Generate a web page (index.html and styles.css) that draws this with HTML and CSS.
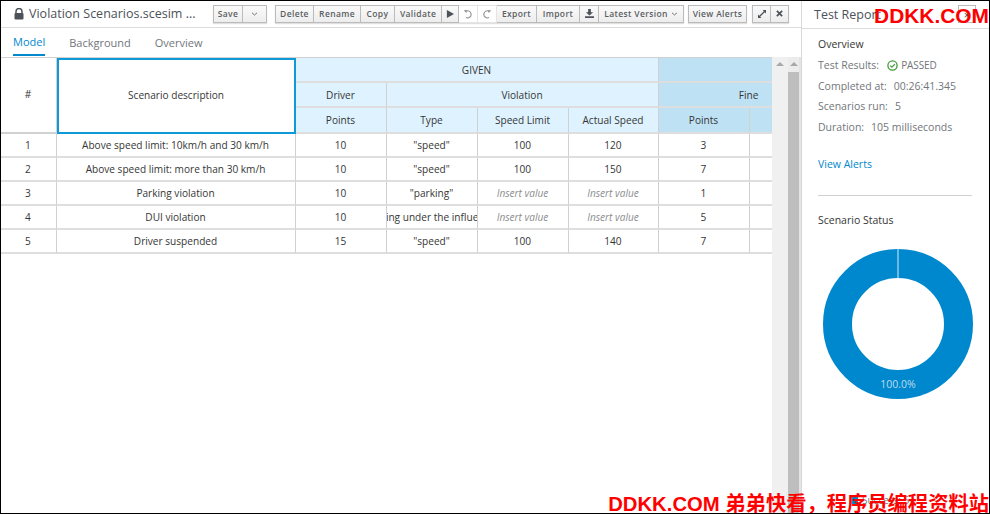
FILE: index.html
```html
<!DOCTYPE html>
<html lang="en">
<head>
<meta charset="utf-8">
<title>Violation Scenarios.scesim</title>
<link rel="stylesheet" href="styles.css">
</head>
<body>
<div class="frame">
  <main class="editor">
    <header class="toolbar">
      <svg class="lock" width="10" height="12" viewBox="0 0 10 12"><path d="M2 5V3.5a3 3 0 0 1 6 0V5" fill="none" stroke="#4d5258" stroke-width="1.5"/><rect x="0.5" y="5" width="9" height="6.5" rx="1" fill="#4d5258"/></svg>
      <span class="doc-title">Violation Scenarios.scesim ...</span>
      <div class="btn-group g-save"><button class="btn">Save</button><button class="btn"><svg width="7" height="4" viewBox="0 0 7 4"><path d="M1 .8l2.5 2.2L6 .8" fill="none" stroke="#72767b"/></svg></button></div>
      <div class="btn-group g-main">
        <button class="btn">Delete</button><button class="btn">Rename</button><button class="btn">Copy</button><button class="btn">Validate</button>
        <button class="btn"><svg width="8" height="8" viewBox="0 0 9 9"><path d="M1 0l8 4.5L1 9z" fill="#4d5258"/></svg></button>
        <button class="btn flat"><svg width="10" height="10" viewBox="0 0 10 10"><path d="M2.6 2.3A3.6 3.6 0 1 1 3 8.6" fill="none" stroke="#8b8d8f" stroke-width="1.1"/><path d="M.8 1.2l3.2.1-.6 2.8z" fill="#8b8d8f"/></svg></button>
        <button class="btn flat"><svg width="10" height="10" viewBox="0 0 10 10"><path d="M7.4 2.3A3.6 3.6 0 1 0 7 8.6" fill="none" stroke="#8b8d8f" stroke-width="1.1"/><path d="M9.2 1.2L6 1.3l.6 2.8z" fill="#8b8d8f"/></svg></button>
        <button class="btn">Export</button><button class="btn">Import</button>
        <button class="btn"><svg width="9" height="9" viewBox="0 0 10 10"><path d="M3.5 0h3v3.5H9L5 7.2 1 3.5h2.5zM0 8h10v2H0z" fill="#4d5258"/></svg></button>
        <button class="btn">Latest Version <svg width="7" height="4" viewBox="0 0 7 4"><path d="M1 .8l2.5 2.2L6 .8" fill="none" stroke="#72767b"/></svg></button>
      </div>
      <div class="btn-group g-alerts"><button class="btn">View Alerts</button></div>
      <div class="btn-group g-win">
        <button class="btn"><svg width="8" height="8" viewBox="0 0 9 9"><path d="M5.2 0H9v3.8L7.6 2.4 2.4 7.6 3.8 9H0V5.2l1.4 1.4 5.2-5.2z" fill="#4d5258"/></svg></button>
        <button class="btn"><svg width="7" height="7" viewBox="0 0 8 8"><path d="M1 1l6 6M7 1L1 7" stroke="#4d5258" stroke-width="2"/></svg></button>
      </div>
    </header>
    <nav class="tabs">
      <a class="tab active">Model</a><a class="tab">Background</a><a class="tab">Overview</a>
    </nav>
    <div class="work">
      <div class="grid-clip">
        <div class="grid">
          <div class="cell head-plain span-r3">#</div>
          <div class="cell head-selected span-r3">Scenario description</div>
          <div class="cell given span-c4">GIVEN</div>
          <div class="cell expect span-c2">&nbsp;</div>
          <div class="cell given">Driver</div>
          <div class="cell given span-c3">Violation</div>
          <div class="cell expect span-c2">Fine</div>
          <div class="cell given">Points</div>
          <div class="cell given">Type</div>
          <div class="cell given">Speed Limit</div>
          <div class="cell given">Actual Speed</div>
          <div class="cell expect">Points</div>
          <div class="cell expect"></div>

          <div class="cell">1</div><div class="cell">Above speed limit: 10km/h and 30 km/h</div><div class="cell">10</div><div class="cell">"speed"</div><div class="cell">100</div><div class="cell">120</div><div class="cell">3</div><div class="cell"></div>
          <div class="cell">2</div><div class="cell">Above speed limit: more than 30 km/h</div><div class="cell">10</div><div class="cell">"speed"</div><div class="cell">100</div><div class="cell">150</div><div class="cell">7</div><div class="cell"></div>
          <div class="cell">3</div><div class="cell">Parking violation</div><div class="cell">10</div><div class="cell">"parking"</div><div class="cell empty">Insert value</div><div class="cell empty">Insert value</div><div class="cell">1</div><div class="cell"></div>
          <div class="cell">4</div><div class="cell">DUI violation</div><div class="cell">10</div><div class="cell">"driving under the influence"</div><div class="cell empty">Insert value</div><div class="cell empty">Insert value</div><div class="cell">5</div><div class="cell"></div>
          <div class="cell">5</div><div class="cell">Driver suspended</div><div class="cell">15</div><div class="cell">"speed"</div><div class="cell">100</div><div class="cell">140</div><div class="cell">7</div><div class="cell"></div>
        </div>
      </div>
      <div class="scrollbars">
        <div class="scroll"><span class="arrow"></span></div>
        <div class="scroll"><span class="arrow"></span><span class="thumb"></span></div>
      </div>
    </div>
  </main>
  <aside class="report">
    <header class="report-head">
      <span class="report-title">Test Report</span>
      <span class="report-close">×</span>
    </header>
    <div class="report-body">
      <h3 class="report-h">Overview</h3>
      <div class="stat"><span>Test Results:</span><span class="passed"><svg width="11" height="11" viewBox="0 0 11 11"><circle cx="5.5" cy="5.5" r="4.6" fill="none" stroke="#3f9c35" stroke-width="1.3"/><path d="M3.2 5.6l1.7 1.6 3-3" fill="none" stroke="#3f9c35" stroke-width="1.2"/></svg>PASSED</span></div>
      <div class="stat"><span>Completed at:</span><span>00:26:41.345</span></div>
      <div class="stat"><span>Scenarios run:</span><span>5</span></div>
      <div class="stat"><span>Duration:</span><span>105 milliseconds</span></div>
      <a class="alerts-link">View Alerts</a>
      <hr class="rule">
      <h3 class="report-h">Scenario Status</h3>
      <div class="donut">
        <svg width="150" height="150" viewBox="0 0 150 150">
          <circle cx="75" cy="75" r="60.5" fill="none" stroke="#0088ce" stroke-width="29"/>
          <rect x="74.5" y="0" width="1" height="30" fill="#d6ecf7"/>
          <text x="75" y="139" text-anchor="middle" class="donut-label">100.0%</text>
        </svg>
      </div>
      <div class="legend"><span class="swatch"></span><span>Success: 5</span></div>
    </div>
  </aside>
  <div class="mark mark-top">DDKK.COM</div>
  <div class="mark mark-bottom">DDKK.COM 弟弟快看，程序员编程资料站</div>
</div>
</body>
</html>
```

FILE: styles.css
```css
* { box-sizing: border-box; }
html, body { margin: 0; padding: 0; }
body { width: 990px; height: 514px; overflow: hidden; background: #fff; font-family: "Open Sans", sans-serif; color: #363636; }

.frame { position: relative; display: flex; width: 990px; height: 514px; border: 1px solid #000; overflow: hidden; background: #fff; }

.editor { width: 800px; display: flex; flex-direction: column; flex: none; }

.toolbar { display: flex; align-items: center; height: 27px; flex: none; padding: 0 0 1px 13px; border-bottom: 1px solid #dcdcdc; }
.lock { flex: none; margin-right: 5px; }
.doc-title { width: 184px; font-size: 12.5px; color: #4d5258; white-space: nowrap; flex: none; }

.btn-group { display: grid; height: 18px; flex: none; box-shadow: 0 1px 1px rgba(0,0,0,.12); }
.g-save { grid-template-columns: 30px 24px; margin-right: 8px; }
.g-main { grid-template-columns: 39px 47px 34px 47px 17px 19px 19px 40px 43px 19px 85px; margin-right: 4px; }
.g-alerts { grid-template-columns: 59px; margin-right: 5px; }
.g-win { grid-template-columns: 19px 18px; }

.btn { display: flex; align-items: center; justify-content: center; gap: 3px; padding: 0; margin: 0; font: 600 8.5px "Open Sans", sans-serif; letter-spacing: .35px; color: #5a5e63; white-space: nowrap; background: linear-gradient(#fafafa, #ededed); border: 1px solid #bbb; border-left-width: 0; }
.btn:first-child { border-left-width: 1px; }
.btn.flat { background: #fff; border-color: #e4e4e4; box-shadow: none; }

.tabs { display: flex; gap: 24px; height: 29px; flex: none; padding-left: 12px; }
.tab { display: flex; align-items: center; height: 28px; font-size: 11px; color: #72767b; }
.tab.active { color: #0088ce; border-bottom: 2px solid #0088ce; }

.work { flex: 1; display: flex; min-height: 0; }
.grid-clip { width: 771px; overflow: hidden; flex: none; }
.grid { display: grid; width: 839px; grid-template-columns: 56px 239px 91px 91px 91px 90px 91px 90px; grid-template-rows: 25px 25px 26px repeat(5, 24px); border-top: 1px solid #d1d1d1; }

.cell { display: flex; align-items: center; justify-content: center; overflow: hidden; white-space: nowrap; padding-right: 1px; font-size: 10.1px; color: #363636; border-right: 1px solid #d1d1d1; border-bottom: 2px solid #dedede; background: #fff; }
.span-r3 { grid-row: span 3; padding-bottom: 2px; }
.span-c2 { grid-column: span 2; }
.span-c3 { grid-column: span 3; }
.span-c4 { grid-column: span 4; }
.given { background: #def3ff; }
.expect { background: #bee1f4; }
.head-plain { border-bottom-color: #d1d1d1; }
.head-selected { border: 2px solid #0e9ad8; }
.empty { font-style: italic; color: #8b8d8f; }

.scrollbars { display: flex; width: 29px; flex: none; }
.scroll { position: relative; width: 16px; background: #f0f0f0; display: flex; flex-direction: column; align-items: center; }
.scroll + .scroll { width: 13px; background: #ececec; border-right: 2px solid #e4e4e4; }
.arrow { display: block; width: 0; height: 0; margin: 5px 0 0; border: 4px solid transparent; border-top-width: 0; border-bottom: 4px solid #a8a8a8; flex: none; }
.thumb { display: block; position: absolute; top: 15px; left: 0; right: 0; bottom: 0; background: #bebebe; }

.report { flex: 1; min-width: 0; border-left: 1px solid #d8d8d8; display: flex; flex-direction: column; }
.report-head { display: flex; align-items: center; justify-content: space-between; height: 28px; flex: none; padding: 0 13px 1px 12px; border-bottom: 1px solid #dcdcdc; }
.report-title { font-size: 12.5px; color: #4d5258; }
.report-close { display: flex; align-items: center; justify-content: center; width: 18px; height: 18px; border: 1px solid #bbb; font-size: 11px; color: #4d5258; }
.report-body { padding: 5px 16px 0; display: flex; flex-direction: column; }
.report-h { margin: 0; font-size: 10.5px; font-weight: 400; line-height: 21px; color: #363636; }
.stat { display: flex; gap: 7px; align-items: center; height: 20.6px; font-size: 10.5px; color: #72767b; white-space: nowrap; }
.passed { display: inline-flex; align-items: center; gap: 3px; margin-left: 1px; font-size: 10px; letter-spacing: -.1px; }
.alerts-link { margin-top: 17px; font-size: 10.5px; line-height: 21px; color: #0088ce; }
.rule { width: 154px; height: 1px; margin: 20px 0 14px; border: 0; background: #d1d1d1; }
.donut { margin: 18px 0 0 5px; height: 150px; }
.donut svg { display: block; }
.donut-label { font: 10.5px "Open Sans", sans-serif; fill: #bcdcee; }
.legend { display: flex; align-items: center; gap: 4px; margin: 94px 0 0 32px; font-size: 10px; color: #72767b; }
.swatch { width: 8px; height: 8px; background: #0088ce; }

.mark { position: absolute; font-family: "Liberation Sans", "Noto Sans CJK SC", sans-serif; font-weight: 700; color: #f00; white-space: nowrap; line-height: 1; }
.mark-top { top: 5px; right: 0; font-size: 20.9px; }
.mark-bottom { bottom: -1px; right: 0; font-size: 20.3px; }
```
